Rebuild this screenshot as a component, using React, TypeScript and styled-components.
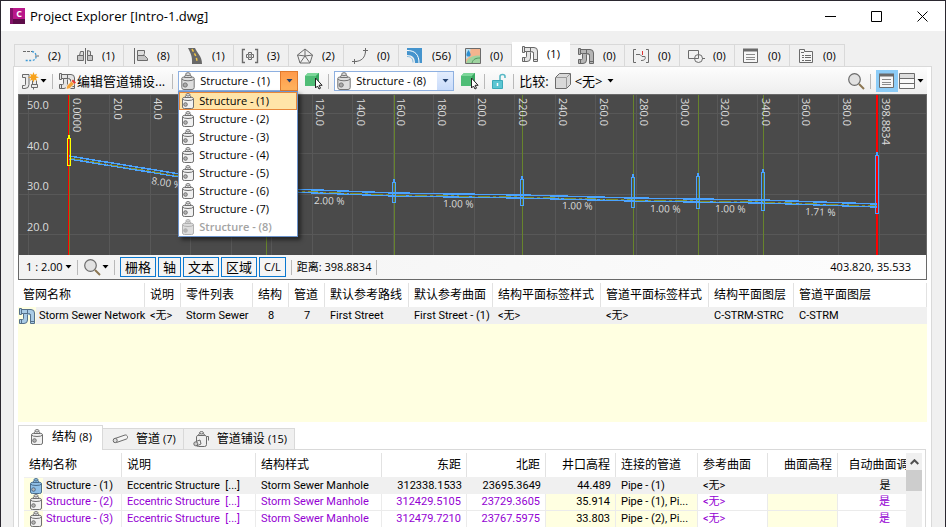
import { FC, Fragment, ReactNode, useState } from "react"
import styled, { createGlobalStyle, css } from "styled-components"

const GlobalStyle = createGlobalStyle`
  * {
    box-sizing: border-box;
  }

  body {
    margin: 0;
    overflow: hidden;
    color: #000;
    font-family: "Open Sans", "Noto Sans CJK SC", sans-serif;
    font-size: 11px;
    line-height: 16px;
  }

  button,
  select {
    margin: 0;
    padding: 0;
    border: 0;
    background: none;
    color: inherit;
    font: inherit;
  }

  svg {
    display: block;
    flex: none;
  }
`

/* ---------- icons ---------- */

const Icon: FC<{ children: ReactNode; w?: number; h?: number }> = ({
  children,
  w = 18,
  h = 18,
}) => (
  <svg
    width={w}
    height={h}
    viewBox={`0 0 ${w} ${h}`}
    fill="none"
    stroke="#6b6b6b"
    strokeWidth="1"
    aria-hidden="true"
  >
    {children}
  </svg>
)

interface ManholeProps {
  body?: string
  line?: string
}

const Manhole: FC<ManholeProps> = ({ body = "#f1f1f1", line = "#707070" }) => (
  <Icon w={14} h={16}>
    <g stroke={line} fill={body}>
      <path d="M1.500 5.500v8.500q0 1.500 2 1.500h7q2 0 2-1.500V5.500q0-1-2-1h-7q-2 0-2 1z" />
      <path d="M1.500 6q1 1.500 5.500 1.500T12.500 6" fill="none" />
      <path d="M4 4.500q0-2 1.500-2h3q1.500 0 1.500 2z" />
      <ellipse cx="7" cy="1.800" rx="2" ry="1.200" />
      <circle cx="4.500" cy="11.500" r="1.800" fill="#b5b5b5" />
    </g>
  </Icon>
)

const ManholeLarge: FC = () => (
  <Icon w={14} h={18}>
    <g stroke="#747474" fill="#dedede">
      <path d="M.8 6.500v9q0 2 2.200 2h8q2.200 0 2.200-2v-9q0-1.500-2.200-1.500H3Q.8 5 .8 6.500z" />
      <path d="M.8 7q1.200 1.800 6.200 1.800T13.200 7" fill="none" />
      <path d="M3.500 5.500q0-2.500 1.700-2.500h3.600q1.700 0 1.700 2.500z" />
      <ellipse cx="7" cy="2.200" rx="2.300" ry="1.500" />
      <circle cx="4.200" cy="13" r="2.100" fill="#aaa" />
    </g>
  </Icon>
)

const PipeShape: FC<{ fill?: string; line?: string }> = ({
  fill = "#e4e4e4",
  line = "#686868",
}) => (
  <g stroke={line} fill={fill}>
    <path d="M3.500 2.500H13q3.500 0 3.500 3.500v10.500h-4V7.500h-3V13q0 3.500-3.500 3.500H1.500v-4h3q1 0 1-1v-5h-2z" />
    <path d="M1.500 1.500h2v6h-2zM5.500 6.500h5q2 0 2 2M9.500 2.500v5M12 14.500h5M3.500 12.500v4" />
  </g>
)

const Pipes: FC<{ fill?: string; line?: string }> = (props) => (
  <Icon>
    <PipeShape {...props} />
  </Icon>
)

const NewNetworkIcon = () => (
  <Icon>
    <path
      d="M1.500 2.500H8v10q0 4-4 4H1.500v-3h2q1 0 1-1v-7h-3zM11.500 8.500v4h4v-4M10.500 12.500h6v3h-6zM12.500 15.500v2"
      fill="#ececec"
    />
    <path
      d="M12.500 0l1 2.700 2.500-1-1 2.500 3 1-3 1 1 2.500-2.500-1-1 2.800-1-2.800-2.500 1 1-2.500-3-1 3-1-1-2.500 2.500 1z"
      fill="#f7a21b"
      stroke="none"
    />
  </Icon>
)

const EditPipesIcon = () => (
  <Icon>
    <PipeShape />
    <path d="M8 17.500l.8-3.800 4.700-4.700 3 3-4.900 4.700z" fill="#f3a43b" stroke="#fff" strokeWidth=".8" />
    <path d="M13.500 9l1.500-1.400 3 3-1.500 1.400z" fill="#e33b35" stroke="none" />
  </Icon>
)

const AlignmentIcon = () => (
  <Icon>
    <path d="M1 4.500h9" strokeDasharray="3 1" />
    <path d="M10 4.500c5 .5 6 8.500 0 9H3" stroke="#3c9ad6" strokeWidth="1.300" strokeDasharray="2 1.500" />
    <path d="M13 9h4" />
  </Icon>
)

const AssemblyIcon = () => (
  <Icon>
    <path d="M9.500 1v16" />
    <path d="M3.500 8.500l1-4h3v4zM11.500 8.500v-5l3 1v4z" fill="#ddd" />
    <path d="M1.500 13.500v-5h6v5zM11.500 13.500v-5h5v5z" fill="#c4c4c4" />
  </Icon>
)

const SectionIcon = () => (
  <Icon>
    <path d="M3.500 1v16" />
    <path d="M6.500 8.500v-5h7v3l-1 2z" fill="#ddd" />
    <path d="M6.500 13.500v-5h7l3 3v2z" fill="#c4c4c4" />
  </Icon>
)

const RoadIcon = () => (
  <Icon>
    <path d="M2 1h7c2 5 7 8 7 16H6C6.500 9 4.500 6 2 1z" fill="#686868" stroke="none" />
    <path d="M6 2c2 4 5 7 5 14" stroke="#f2c545" strokeWidth="1.500" strokeDasharray="3 2" />
  </Icon>
)

const PointsIcon = () => (
  <Icon>
    <path d="M4 2.500H1.500v13H4M14 2.500h2.500v13H14" strokeWidth="1.400" />
    <circle cx="9" cy="9" r="1.500" />
    <path d="M7.500 7.500v-2h3v2h2v3h-2v2h-3v-2h-2v-3z" />
  </Icon>
)

const SurfaceIcon = () => (
  <Icon>
    <path d="M9 2l7.500 6-2.500 8H4L1.500 8zM9 2v7l7.500-1M9 9l-7.500-1M9 9l-5 7M9 9l5 7" />
  </Icon>
)

const FeatureLineIcon = () => (
  <Icon>
    <path d="M3.500 14.500c7 0 11-4 11-11M1 14.500h5M3.500 12v5M12 3.500h5M14.500 1v5" />
  </Icon>
)

const CorridorIcon = () => (
  <Icon>
    <path d="M1 1h15v15H9C9 11 7 8 1 8z" fill="#4594cd" stroke="none" />
    <path d="M1 3.500c8 0 12 4 12 12.500" stroke="#fff" />
    <path d="M1 9.500c4 0 6 2 6 6" stroke="#7fb8dd" />
  </Icon>
)

const CatchmentIcon = () => (
  <Icon>
    <path d="M1.500 1.500h15v15h-15z" fill="#f3b48e" />
    <path d="M2 16c2-6 7-7.500 14-7.500V16z" fill="#9fd3a0" stroke="none" />
    <path d="M2 12c3-1 4-4 4.500-10H2z" fill="#b9dff0" stroke="none" />
    <path d="M4.500 3C8 8 6.500 9.500 4.500 9.500S1 8 4.500 3z" fill="#2f8fd0" stroke="none" />
    <path d="M8 16c1-4 4-5 8-5" stroke="#4f9960" />
  </Icon>
)

const PressureIcon = () => (
  <Icon>
    <path d="M4 2.500H1.500v13H4M14 2.500h2.500v13H14" />
    <path d="M4 7.500h4l2 2h3c1 3-1 4-4 4" />
    <path d="M10.500 4v4" stroke="#d33" />
  </Icon>
)

const ShapesIcon = () => (
  <Icon>
    <path d="M1.500 3.500h10v8h-10z" />
    <circle cx="11.500" cy="11.500" r="4" />
    <path d="M15 11.500h3" />
  </Icon>
)

const ListIcon = () => (
  <Icon>
    <path d="M1.500 2.500h14v13h-14z" fill="#f6f6f6" />
    <path d="M1 3h15" strokeWidth="3" />
    <path d="M4 7.500h9M4 10.500h9M4 12.500h9" stroke="#8b8b8b" />
  </Icon>
)

const FolderListIcon = () => (
  <Icon>
    <path d="M2.500 15.500v-13h5v2h8v11z" fill="#f6f6f6" />
    <path d="M4 5.500h3M5 8.500h2M8 8.500h6M5 10.500h2M8 10.500h6M5 13.500h2M8 13.500h6" />
  </Icon>
)

const SplitIcon = () => (
  <Icon>
    <path d="M1.500 1.500h15v15h-15z" fill="#fafafa" />
    <path d="M2 2h14v4H2z" fill="#ddd" stroke="none" />
    <path d="M1.500 6.500h15M1.500 11.500h15" />
  </Icon>
)

const PickIcon = () => (
  <Icon>
    <path d="M0 4l3-3h11v10l-3 3H0z" fill="#4fbd76" stroke="none" />
    <path d="M0 4l3-3h11l-3 3z" fill="#7bd698" stroke="none" />
    <path d="M11 4l3-3v10l-3 3z" fill="#37a860" stroke="none" />
    <path d="M10.500 6v10l2-2 1.500 3 1.500-.8-1.400-2.900h3z" fill="#fff" stroke="#222" />
  </Icon>
)

const LockIcon = () => (
  <Icon>
    <path d="M10 8V4.500q0-2 2.500-2t2.500 2V6" stroke="#58b8c5" strokeWidth="1.600" />
    <path d="M2.500 8.500h10v8h-10z" fill="#5bc5d2" stroke="#3ba9b8" />
    <path d="M7.500 11v3" stroke="#fff" strokeWidth="1.500" />
  </Icon>
)

const BoxIcon = () => (
  <Icon>
    <path d="M1.500 5.500l4-4h11v11l-4 4h-11z" fill="#d9d9d9" />
    <path d="M1.500 5.500h11l4-4M12.500 5.500v11" stroke="#9a9a9a" />
  </Icon>
)

const SearchIcon = () => (
  <Icon>
    <circle cx="7.500" cy="7.500" r="5.800" fill="#e2e2e2" strokeWidth="1.200" />
    <path d="M12 12l5 5" stroke="#8c7652" strokeWidth="2" />
  </Icon>
)

const PipeIcon = () => (
  <Icon w={16} h={16}>
    <path d="M3 7.500l10-3.500c2.500-.5 3.500 3 1.500 4L4.500 11.500z" fill="#f4f4f4" />
    <ellipse cx="3.200" cy="9.500" rx="2" ry="2.200" fill="#ddd" />
  </Icon>
)

const PipeRunIcon = () => (
  <Icon w={16} h={16}>
    <path d="M3.500 5.500v8q0 2 2 2h6q2 0 2-2v-8q0-1-2-1h-6q-2 0-2 1z" fill="#eee" />
    <path d="M5.500 4.500q0-2 1.500-2h3q1.500 0 1.500 2M13.500 5.500h2v4" />
    <ellipse cx="8.500" cy="1.800" rx="2" ry="1.200" fill="#eee" />
    <path d="M3 10.500l4-1.500 1 4-4.500 2" fill="#eee" />
    <circle cx="2.800" cy="12.800" r="2" fill="#ccc" />
  </Icon>
)

const Caret = () => (
  <svg width="7" height="4" viewBox="0 0 7 4" aria-hidden="true">
    <path d="M0.500 0h6l-3 3.500z" fill="currentColor" />
  </svg>
)

/* ---------- window ---------- */

const Window = styled.div`
  display: flex;
  flex-direction: column;
  height: 100vh;
  border: 1px solid #2b2830;
  border-bottom: 0;
  background: #f0f0f0;
`

const TitleBar = styled.header`
  display: flex;
  align-items: center;
  gap: 5px;
  height: 30px;
  flex: none;
  padding-left: 9px;
  background: #fff;
`

const AppIcon = styled.div`
  width: 15px;
  height: 16px;
  border-left: 3px solid #84126a;
  background: linear-gradient(#b9178a 66%, #5d0d49 66%);
  color: #fff;
  font-size: 9px;
  font-weight: 700;
  line-height: 11px;
  text-align: center;
`

const Title = styled.h1`
  flex: 1;
  margin: 0;
  font-size: 13px;
  font-weight: 400;
  line-height: 18px;
`

const WindowButtons = styled.div`
  display: flex;
`

const WindowButton = styled.button`
  display: flex;
  align-items: center;
  justify-content: center;
  width: 46px;
  height: 30px;
`

const TabStrip = styled.nav`
  display: flex;
  align-items: flex-end;
  flex: none;
  height: 35px;
  padding-left: 13px;
`

const Tab = styled.button<{ $active?: boolean }>`
  display: flex;
  align-items: center;
  gap: 8px;
  min-width: 55px;
  height: 22px;
  padding: 1px 5px 0 7px;
  border: 1px solid #d9d9d9;
  border-width: 1px 1px 0 0;

  &:first-child {
    border-left-width: 1px;
  }

  ${({ $active }) =>
    $active &&
    css`
      height: 24px;
      padding: 0 9px 2px;
      background: #fff;
      border-color: #fff;
    `}
`

const Panel = styled.main`
  display: flex;
  flex-direction: column;
  flex: 1;
  min-height: 0;
  margin: 0 13px 0 12px;
  padding: 0 4px;
  border: 1px solid #d9d9d9;
  border-bottom: 0;
  background: #fff;
`

const Toolbar = styled.div`
  display: flex;
  align-items: center;
  flex: none;
  height: 27px;
  padding: 1px 3px 0;
  background: linear-gradient(#fdfdfd, #eee);
`

const ToolButton = styled.button<{ $active?: boolean }>`
  display: flex;
  align-items: center;
  gap: 1px;
  height: 22px;
  background: ${({ $active }) => ($active ? "#8cccf7" : "none")};
  padding: ${({ $active }) => ($active ? "0 2px" : "0")};
`

const ToolText = styled.span`
  padding-right: 2px;
  font-size: 13px;
  white-space: nowrap;
`

const Separator = styled.span`
  width: 1px;
  height: 15px;
  margin: 0 5px;
  background: #b9b9b9;
`

const Spacer = styled.span`
  flex: 1;
`

const ComboWrap = styled.div`
  position: relative;
  margin-right: 7px;
`

const Combo = styled.label`
  display: flex;
  align-items: center;
  width: 120px;
  height: 20px;
  padding-left: 2px;
  border: 1px solid #8eb0e0;
  background: #fff;
`

const ComboSelect = styled.select`
  flex: 1;
  min-width: 0;
  padding-left: 5px;
  appearance: none;
  outline: 0;
`

const ComboArrow = styled.span<{ $open?: boolean }>`
  display: flex;
  align-items: center;
  justify-content: center;
  width: 16px;
  height: 18px;
  color: #23406e;
  background: ${({ $open }) =>
    $open ? "linear-gradient(#ff9a4a, #ffb35e)" : "linear-gradient(#e3edfd, #c8dbfa)"};
  box-shadow: ${({ $open }) => ($open ? "0 0 0 1px #e07b2e" : "none")};
`

const Popup = styled.ul`
  position: absolute;
  z-index: 2;
  top: 100%;
  left: 0;
  width: 120px;
  margin: 0;
  padding: 0;
  border: 1px solid #6d94cc;
  background: #fff;
  box-shadow: 3px 3px 4px rgba(0, 0, 0, 0.5);
  list-style: none;
`

const PopupItem = styled.li<{ $active?: boolean; $disabled?: boolean }>`
  display: flex;
  align-items: center;
  gap: 4px;
  height: 18px;
  padding-left: 2px;
  color: ${({ $disabled }) => ($disabled ? "#a3a3a3" : "#000")};
  font-weight: ${({ $disabled }) => ($disabled ? 600 : 400)};
  background: ${({ $active }) => ($active ? "#ffe4a8" : "none")};
  box-shadow: ${({ $active }) => ($active ? "inset 0 0 0 1px #e8883a" : "none")};
`

const FlatSelect = styled.label`
  display: flex;
  align-items: center;
  gap: 2px;

  select {
    appearance: none;
  }
`

const CompareGroup = styled.div`
  display: flex;
  align-items: center;
  gap: 3px;
`

/* ---------- profile view ---------- */

const Viewer = styled.section`
  display: flex;
  flex-direction: column;
  flex: none;
  border: 1px solid #696969;
`

const Chart = styled.svg`
  width: 100%;
  height: 160px;
  background: #4a4a4a;
  shape-rendering: crispEdges;
  font-size: 11px;
`

const StatusBar = styled.div`
  display: flex;
  align-items: center;
  height: 24px;
  padding: 0 15px 0 7px;
  background: linear-gradient(90deg, #f2f2f2, #fdfdfd);
`

const Toggle = styled.button`
  height: 20px;
  margin-right: 2px;
  padding: 0 4px;
  border: 1px solid #0a78d0;
  font-size: 13px;
  line-height: 16px;
  white-space: nowrap;
`

const SmallToggle = styled(Toggle)`
  margin-right: 0;
  font-size: 11px;
`

const stationX = (station: number) => 50 + station * 2.025
const elevationY = (elevation: number) => 18 + (50 - elevation) * 4.05

const stations = Array.from({ length: 22 }, (_, i) => i * 20 - 20)
const elevations = [50, 40, 30, 20]

// x, rim, bottom and pipe height on the canvas
const structures = [
  { x: 50, top: 40, bottom: 71, pipe: 62 },
  { x: 247, top: 74, bottom: 106, pipe: 94 },
  { x: 375, top: 84, bottom: 108, pipe: 99 },
  { x: 503, top: 81, bottom: 111, pipe: 101 },
  { x: 614, top: 79, bottom: 113, pipe: 104 },
  { x: 679, top: 78, bottom: 114, pipe: 105 },
  { x: 744, top: 74, bottom: 116, pipe: 106 },
  { x: 858, top: 57, bottom: 119, pipe: 110 },
]

const slopes = [
  { x: 132, y: 89, text: "8.00 %", angle: 9 },
  { x: 295, y: 109, text: "2.00 %", angle: 1 },
  { x: 424, y: 112, text: "1.00 %", angle: 1 },
  { x: 543, y: 114, text: "1.00 %", angle: 1 },
  { x: 631, y: 117, text: "1.00 %", angle: 1 },
  { x: 696, y: 117, text: "1.00 %", angle: 1 },
  { x: 786, y: 120, text: "1.71 %", angle: 2 },
]

const ProfileChart = () => (
  <Chart role="img" aria-label="Storm Sewer Network">
    <g stroke="#585858">
      {stations.map((s) => (
        <line key={s} x1={stationX(s)} x2={stationX(s)} y1="0" y2="160" />
      ))}
      {elevations.map((e) => (
        <line key={e} x1="0" x2="100%" y1={elevationY(e)} y2={elevationY(e)} />
      ))}
    </g>
    {/* station markers and the two ends of the network */}
    <g fill="#67842c">
      {structures.map(({ x }) => (
        <rect key={x} x={x} y="0" width="1" height="160" />
      ))}
    </g>
    <g fill="#f00">
      <rect x="49" y="0" width="1" height="160" />
      <rect x="857" y="0" width="2" height="160" />
    </g>
    {structures.slice(1).map((s, i) => {
      const from = structures[i]
      return (
        <Fragment key={s.x}>
          <line x1={from.x} y1={from.pipe - 1} x2={s.x} y2={s.pipe - 1} stroke="#4aa3ff" strokeWidth="1.500" />
          <line x1={from.x} y1={from.pipe + 2} x2={s.x} y2={s.pipe + 2} stroke="#4aa3ff" strokeWidth="1.500" />
          <line
            x1={from.x}
            y1={from.pipe + 1}
            x2={s.x}
            y2={s.pipe + 1}
            stroke="#7f8f2c"
            strokeDasharray="12 3 3 3"
          />
        </Fragment>
      )
    })}
    {structures.map((s, i) => (
      <g key={s.x} fill="none" stroke={i === 0 ? "#ff0" : "#4aa3ff"}>
        <rect x={s.x - 1.5} y={s.top + 3.5} width="3" height={s.bottom - s.top - 4} />
        <path d={`M${s.x} ${s.top}v3`} strokeWidth="2" />
      </g>
    ))}
    <g fill="#dcdcdc">
      {elevations.map((e) => (
        <text key={e} x="8" y={elevationY(e) - 4}>
          {e.toFixed(1)}
        </text>
      ))}
      {stations.slice(1, -1).map((s) => (
        <text key={s} transform={`translate(${stationX(s) + 4} 3) rotate(90)`}>
          {s === 0 ? "0.0000" : s.toFixed(1)}
        </text>
      ))}
      <text transform="translate(863 3) rotate(90)">398.8834</text>
      {slopes.map((s) => (
        <text key={s.x} fontSize="10" transform={`translate(${s.x} ${s.y}) rotate(${s.angle})`}>
          {s.text}
        </text>
      ))}
    </g>
  </Chart>
)

/* ---------- tables ---------- */

const Table = styled.table<{ $minWidth?: number }>`
  width: 100%;
  min-width: ${({ $minWidth }) => ($minWidth ? `${$minWidth}px` : "0")};
  border-spacing: 0;
  table-layout: fixed;
  font-family: Roboto, "Noto Sans CJK SC", sans-serif;
`

const HeadCell = styled.th<{ $align?: string }>`
  height: 24px;
  padding: 0 5px;
  border-right: 1px solid #e2e2e2;
  font-size: 12px;
  font-weight: 400;
  text-align: ${({ $align }) => $align ?? "left"};
  white-space: nowrap;
`

const Cell = styled.td<{ $align?: string; $yellow?: boolean; $lined?: boolean }>`
  height: 17px;
  padding: 0 5px;
  line-height: 16px;
  text-align: ${({ $align }) => $align ?? "left"};
  white-space: pre;
  background: ${({ $yellow }) => ($yellow ? "#ffffe1" : "none")};
  ${({ $lined }) =>
    $lined &&
    css`
      border-right: 1px solid #ebebeb;
      border-bottom: 1px solid #ebebeb;
    `}
`

const NameCell = styled(Cell)`
  padding: 0;
`

const Row = styled.tr<{ $selected?: boolean }>`
  color: ${({ $selected }) => ($selected ? "#000" : "#9400d3")};
  background: ${({ $selected }) => ($selected ? "#f0f0f0" : "#fff")};
`

const Name = styled.span`
  display: flex;
  align-items: center;
  gap: 3px;
  height: 16px;
`

const IconBox = styled.span`
  display: flex;
  justify-content: flex-end;
  width: 19px;
  background: #ffffe1;
`

const Dark = styled.span`
  color: #000;
`

const NetworkArea = styled.section`
  flex: none;
  height: 139px;
  margin-top: 3px;
  background: #ffffe1;

  thead {
    background: #fff;
  }
`

const DetailTabs = styled.nav`
  display: flex;
  align-items: flex-end;
  flex: none;
  height: 26px;
  margin-top: 1px;
`

const DetailTab = styled.button<{ $active?: boolean }>`
  display: flex;
  align-items: center;
  gap: 8px;
  height: 21px;
  padding: 0 7px 0 9px;
  border: 1px solid #d9d9d9;
  border-width: 1px 1px 0 0;
  background: #f0f0f0;
  font-size: 12px;

  small {
    font-size: 11px;
  }

  ${({ $active }) =>
    $active &&
    css`
      z-index: 1;
      height: 25px;
      margin-bottom: -1px;
      padding: 0 10px 3px 11px;
      border-left-width: 1px;
      background: #fff;
    `}
`

const DetailPanel = styled.section`
  display: flex;
  flex: 1;
  min-height: 0;
  margin-right: 1px;
  padding: 3px 3px 0 5px;
  border: 1px solid #d9d9d9;
  border-bottom: 0;
  overflow: hidden;
`

const TableClip = styled.div`
  flex: 1;
  min-width: 0;
  overflow: hidden;
`

const Scrollbar = styled.div`
  display: flex;
  flex-direction: column;
  width: 16px;
  background: #f0f0f0;
`

const ScrollButton = styled.button`
  display: flex;
  align-items: center;
  justify-content: center;
  height: 17px;
`

const Thumb = styled.div`
  height: 21px;
  background: #cdcdcd;
`

/* ---------- data ---------- */

const tabs = [
  { icon: <AlignmentIcon />, count: 2 },
  { icon: <AssemblyIcon />, count: 1 },
  { icon: <SectionIcon />, count: 8 },
  { icon: <RoadIcon />, count: 1 },
  { icon: <PointsIcon />, count: 3 },
  { icon: <SurfaceIcon />, count: 2 },
  { icon: <FeatureLineIcon />, count: 0 },
  { icon: <CorridorIcon />, count: 56 },
  { icon: <CatchmentIcon />, count: 0 },
  { icon: <Pipes />, count: 1 },
  { icon: <Pipes fill="#b5b5b5" />, count: 0 },
  { icon: <PressureIcon />, count: 0 },
  { icon: <ShapesIcon />, count: 0 },
  { icon: <ListIcon />, count: 0 },
  { icon: <FolderListIcon />, count: 0 },
]

const structureNames = Array.from({ length: 8 }, (_, i) => `Structure - (${i + 1})`)

const networkColumns = [
  { title: "管网名称", width: 127 },
  { title: "说明", width: 36, value: "<无>" },
  { title: "零件列表", width: 72, value: "Storm Sewer" },
  { title: "结构", width: 36, value: "8", align: "center" },
  { title: "管道", width: 36, value: "7", align: "center" },
  { title: "默认参考路线", width: 84, value: "First Street" },
  { title: "默认参考曲面", width: 84, value: "First Street - (1)" },
  { title: "结构平面标签样式", width: 108, value: "<无>" },
  { title: "管道平面标签样式", width: 108, value: "<无>" },
  { title: "结构平面图层", width: 85, value: "C-STRM-STRC" },
  { title: "管道平面图层", value: "C-STRM" },
]

const structureColumns = [
  { title: "结构名称", width: 98 },
  { title: "说明", width: 134 },
  { title: "结构样式", width: 126 },
  { title: "东距", width: 85, align: "right" },
  { title: "北距", width: 79, align: "right" },
  { title: "井口高程", width: 70, align: "right" },
  { title: "连接的管道", width: 82 },
  { title: "参考曲面", width: 70 },
  { title: "曲面高程", width: 70, align: "right" },
  { title: "自动曲面调整", width: 94, align: "center" },
]

const structureRows = [
  { name: "Structure - (1)", east: "312338.1533", north: "23695.3649", rim: "44.489", pipes: "Pipe - (1)" },
  { name: "Structure - (2)", east: "312429.5105", north: "23729.3605", rim: "35.914", pipes: "Pipe - (1), Pi..." },
  { name: "Structure - (3)", east: "312479.7210", north: "23767.5975", rim: "33.803", pipes: "Pipe - (2), Pi..." },
]

interface StructureComboProps {
  label: string
  initial: string
  open?: boolean
}

const StructureCombo: FC<StructureComboProps> = ({ label, initial, open }) => {
  const [value, setValue] = useState(initial)

  return (
    <ComboWrap>
      <Combo>
        <ManholeLarge />
        <ComboSelect aria-label={label} value={value} onChange={(e) => setValue(e.target.value)}>
          {structureNames.map((name) => (
            <option key={name}>{name}</option>
          ))}
        </ComboSelect>
        <ComboArrow $open={open}>
          <Caret />
        </ComboArrow>
      </Combo>
      {open && (
        <Popup role="listbox" aria-label={label}>
          {structureNames.map((name, i) => (
            <PopupItem
              key={name}
              role="option"
              aria-selected={name === value}
              $active={name === value}
              $disabled={i === 7}
              onClick={() => i !== 7 && setValue(name)}
            >
              {i === 7 ? <Manhole body="#dcdcdc" line="#b0b0b0" /> : <Manhole />}
              {name}
            </PopupItem>
          ))}
        </Popup>
      )}
    </ComboWrap>
  )
}

const NetworkTable = () => (
  <Table>
    <colgroup>
      {networkColumns.map((c) => (
        <col key={c.title} width={c.width} />
      ))}
    </colgroup>
    <thead>
      <tr>
        {networkColumns.map((c) => (
          <HeadCell key={c.title}>{c.title}</HeadCell>
        ))}
      </tr>
    </thead>
    <tbody>
      <Row $selected>
        <NameCell>
          <Name>
            <IconBox>
              <Pipes fill="#a9cbe6" line="#55708a" />
            </IconBox>
            Storm Sewer Network
          </Name>
        </NameCell>
        {networkColumns.slice(1).map((c) => (
          <Cell key={c.title} $align={c.align}>
            {c.value}
          </Cell>
        ))}
      </Row>
    </tbody>
  </Table>
)

const StructureTable = () => (
  <Table $minWidth={908}>
    <colgroup>
      {structureColumns.map((c) => (
        <col key={c.title} width={c.width} />
      ))}
    </colgroup>
    <thead>
      <tr>
        {structureColumns.map((c) => (
          <HeadCell key={c.title} $align={c.align}>
            {c.title}
          </HeadCell>
        ))}
      </tr>
    </thead>
    <tbody>
      {structureRows.map((r, i) => {
        const selected = i === 0
        return (
          <Row key={r.name} $selected={selected}>
            <NameCell $lined={!selected}>
              <Name>
                <IconBox>{selected ? <Manhole body="#8fbfe6" line="#4b6d8c" /> : <Manhole />}</IconBox>
                {r.name}
              </Name>
            </NameCell>
            <Cell $lined={!selected}>{"Eccentric Structure  [...]"}</Cell>
            <Cell $lined={!selected}>Storm Sewer Manhole</Cell>
            <Cell $lined={!selected} $align="right">
              {r.east}
            </Cell>
            <Cell $lined={!selected} $align="right">
              {r.north}
            </Cell>
            <Cell $lined={!selected} $align="right" $yellow={!selected}>
              <Dark>{r.rim}</Dark>
            </Cell>
            <Cell $lined={!selected} $yellow={!selected}>
              <Dark>{r.pipes}</Dark>
            </Cell>
            <Cell $lined={!selected}>{"<无>"}</Cell>
            <Cell $lined={!selected} $yellow={!selected} />
            <Cell $lined={!selected} $align="center">
              是
            </Cell>
          </Row>
        )
      })}
    </tbody>
  </Table>
)

export default function App() {
  return (
    <Window>
      <GlobalStyle />
      <TitleBar>
        <AppIcon>C</AppIcon>
        <Title>Project Explorer [Intro-1.dwg]</Title>
        <WindowButtons>
          <WindowButton aria-label="Minimize">
            <svg width="11" height="11" stroke="#000">
              <path d="M0 5.500h11" />
            </svg>
          </WindowButton>
          <WindowButton aria-label="Maximize">
            <svg width="11" height="11" fill="none" stroke="#000">
              <path d="M.5.500h10v10h-10z" />
            </svg>
          </WindowButton>
          <WindowButton aria-label="Close">
            <svg width="11" height="11" stroke="#000">
              <path d="M.5.500l10 10M10.500.500l-10 10" />
            </svg>
          </WindowButton>
        </WindowButtons>
      </TitleBar>

      <TabStrip>
        {tabs.map((t, i) => (
          <Tab key={i} $active={i === 9}>
            {t.icon}({t.count})
          </Tab>
        ))}
      </TabStrip>

      <Panel>
        <Toolbar>
          <ToolButton aria-label="New network">
            <NewNetworkIcon />
            <Caret />
          </ToolButton>
          <Separator />
          <ToolButton>
            <EditPipesIcon />
            <ToolText>编辑管道铺设...</ToolText>
          </ToolButton>
          <Separator />
          <StructureCombo label="From" initial={structureNames[0]} open />
          <ToolButton aria-label="Pick start">
            <PickIcon />
          </ToolButton>
          <Separator />
          <StructureCombo label="To" initial={structureNames[7]} />
          <ToolButton aria-label="Pick end">
            <PickIcon />
          </ToolButton>
          <Separator />
          <ToolButton aria-label="Lock">
            <LockIcon />
          </ToolButton>
          <Separator />
          <CompareGroup>
            <ToolText as="label" htmlFor="compare">
              比较:
            </ToolText>
            <BoxIcon />
            <FlatSelect>
              <ToolText as="select" id="compare">
                <option>{"<无>"}</option>
              </ToolText>
              <Caret />
            </FlatSelect>
          </CompareGroup>
          <Spacer />
          <ToolButton aria-label="Zoom">
            <SearchIcon />
          </ToolButton>
          <Separator />
          <ToolButton aria-label="List view" $active>
            <ListIcon />
          </ToolButton>
          <ToolButton aria-label="Layout">
            <SplitIcon />
            <Caret />
          </ToolButton>
        </Toolbar>

        <Viewer>
          <ProfileChart />
          <StatusBar>
            <FlatSelect>
              <select aria-label="Scale">
                <option>1 : 2.00</option>
              </select>
              <Caret />
            </FlatSelect>
            <Separator />
            <ToolButton aria-label="Zoom options">
              <SearchIcon />
              <Caret />
            </ToolButton>
            <Separator />
            <Toggle>栅格</Toggle>
            <Toggle>轴</Toggle>
            <Toggle>文本</Toggle>
            <Toggle>区域</Toggle>
            <SmallToggle>C/L</SmallToggle>
            <Separator />
            <span>距离: 398.8834</span>
            <Separator />
            <Spacer />
            <span>403.820, 35.533</span>
          </StatusBar>
        </Viewer>

        <NetworkArea>
          <NetworkTable />
        </NetworkArea>

        <DetailTabs>
          <DetailTab $active>
            <Manhole />
            <span>
              结构 <small>(8)</small>
            </span>
          </DetailTab>
          <DetailTab>
            <PipeIcon />
            <span>
              管道 <small>(7)</small>
            </span>
          </DetailTab>
          <DetailTab>
            <PipeRunIcon />
            <span>
              管道铺设 <small>(15)</small>
            </span>
          </DetailTab>
        </DetailTabs>
        <DetailPanel>
          <TableClip>
            <StructureTable />
          </TableClip>
          <Scrollbar>
            <ScrollButton aria-label="Scroll up">
              <svg width="9" height="6" fill="none" stroke="#505050" strokeWidth="2">
                <path d="M.7 5l3.800-3.800L8.300 5" />
              </svg>
            </ScrollButton>
            <Thumb />
          </Scrollbar>
        </DetailPanel>
      </Panel>
    </Window>
  )
}
